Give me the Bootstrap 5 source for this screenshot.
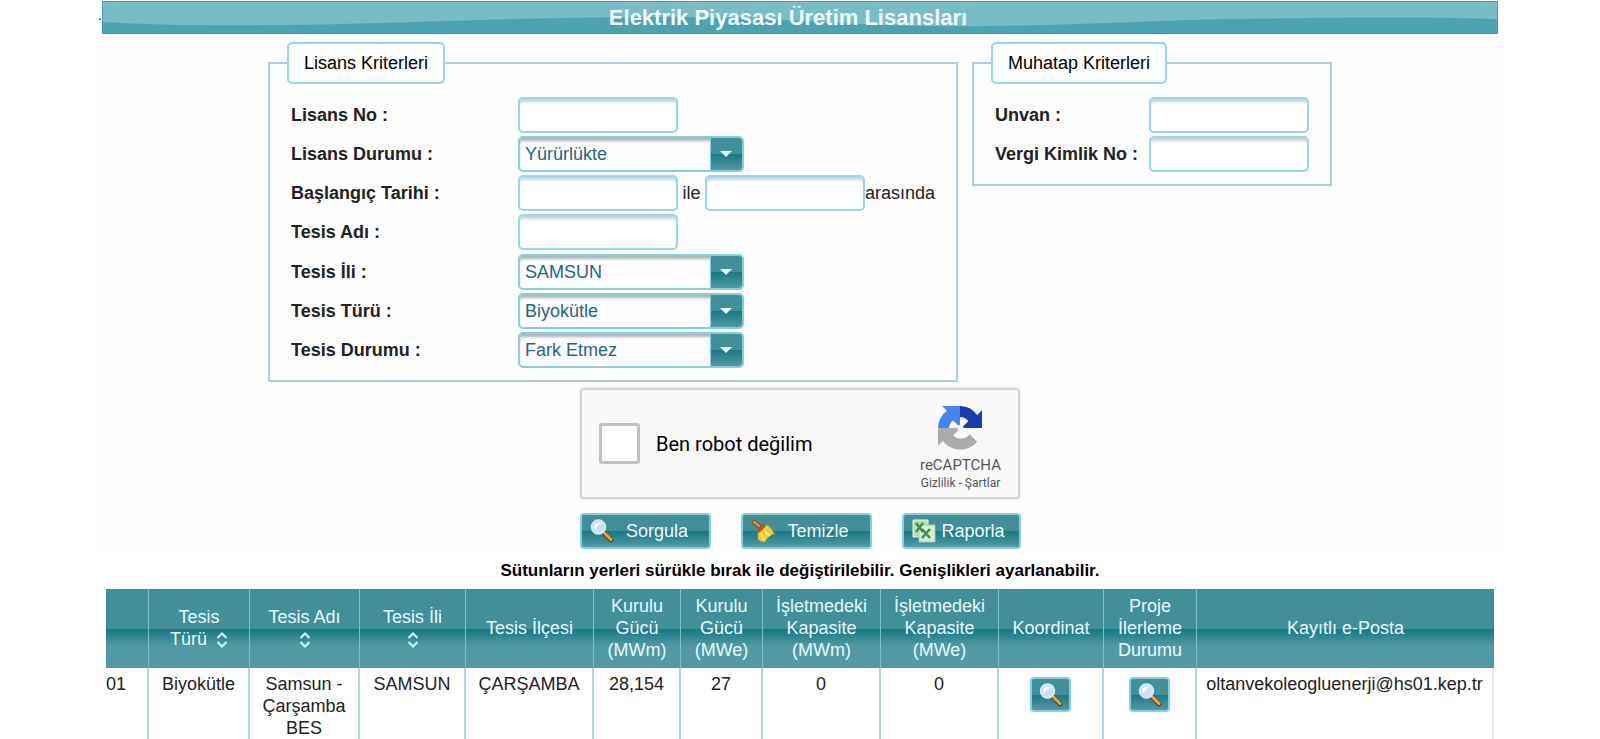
<!DOCTYPE html>
<html lang="tr">
<head>
<meta charset="utf-8">
<meta name="viewport" content="width=device-width, initial-scale=1">
<title>Elektrik Piyasası Üretim Lisansları</title>
<link href="https://cdn.jsdelivr.net/npm/bootstrap@5.3.0/dist/css/bootstrap.min.css" rel="stylesheet">
<style>
:root{--teal:linear-gradient(#418f98 0,#418f98 50%,#167883 50%,#1f7d88 56%,#5299a3 100%)}
body{font-family:"Liberation Sans",Arial,sans-serif;font-size:18px;line-height:22px;color:#222;background:#fff}
.page{max-width:1396px}
.title-bar{height:33px;margin-top:1px;border:1px solid #4a98c2;background:#78bcc6}
.title-bar svg{inset:0}
.title-bar h1{font-size:22px;line-height:31px;color:#eefcff;padding-right:24px}
.lead-dot{left:-5px;top:2px;font-size:14px;color:#000}
.form-area{background:#fdfdfd}
.criteria-row{gap:14px}
.criteria{border:2px solid #b0cfdd;padding:11px 21px 10px}
.criteria legend{float:none;width:auto;margin:0 0 0 -4px;padding:8px 15px;font-size:18px;line-height:22px;color:#000;border:2px solid #98d6e8;border-radius:5px;background:#fdfdfd}
.rows-main{display:grid;grid-template-rows:repeat(7,1fr);min-height:275px}
.rows-side{display:grid;grid-template-rows:repeat(2,1fr);min-height:79px}
.lbl{font-weight:bold}
.lbl-main{width:227px}.lbl-side{width:154px}
.between{width:27px;text-align:center}
.field{width:160px;height:36px;padding:0 6px;border:2px solid #98d6e8;border-radius:5px;background:#fff;box-shadow:inset 0 4px 3px -1px #c6d5dd}
.pick{width:226px;height:36px;border:2px solid #88cddd;border-radius:5px;box-shadow:inset 0 4px 3px -1px #a9b5b9}
.pick select{appearance:none;border:0;background:transparent;color:#1c6786;padding:0 5px;font-size:18px;line-height:22px}
.pick .arrow{width:32px;right:0;top:0;bottom:0;background:var(--teal);border-left:1px solid #88cddd;border-radius:0 3px 3px 0;pointer-events:none}
.captcha{width:440px;height:111px;margin-top:6px;border:2px solid #d6d6d6;border-radius:4px;background:#f9f9f9;padding:0 17px;font-family:Roboto,sans-serif;color:#000;box-shadow:0 0 3px #ddd}
.captcha input{appearance:none;width:41px;height:41px;border:3px solid #c1c1c1;border-radius:3px;background:#fff}
.captcha label{font-size:20px;line-height:24px}
.captcha .logo{padding-top:10px}
.captcha .brand{font-size:15px;line-height:20px;margin-top:5px;color:#555}
.captcha .legal{font-size:12px;line-height:16px;color:#555}
.captcha a{color:inherit;text-decoration:none}
.actions{gap:30px;padding-top:14px}
.act{height:36px;border:2px solid #84d0e0;border-radius:4px;background:var(--teal);color:#f0fcff;font-size:18px;line-height:22px;padding:0 8px}
.act-wide{width:131px}.act-report{width:119px}
.hint{color:#000;font-size:17px;line-height:22px;padding-top:11px;margin-bottom:7px}
.grid-wrap{margin:0 4px}
.licences{table-layout:fixed;border-collapse:separate;border-spacing:0}
.licences thead{background:linear-gradient(#418f98 0,#418f98 50%,#167883 51%,#2b838e 58%,#5299a3 72%,#5299a3 100%)}
.licences th{height:79px;padding:0 4px 2px;font-weight:normal;color:#e6fbff;text-align:center;vertical-align:middle;border-right:1px solid #79bfcc}
.licences td{height:72px;padding:5px 4px 0;text-align:center;vertical-align:top;border-right:2px solid #b4d2e2}
.licences td:first-child{text-align:left;padding-left:0}
.licences th:last-child{border-right:0}
.licences td:last-child{border-right-color:#e2e8ee}
.look{width:41px;height:35px;margin-top:4px;padding:0}
.look svg,.licences th svg{display:inline-block}
.c-no{width:43px}.c-type{width:101px}.c-name{width:110px}.c-city{width:106px}.c-town{width:128px}.c-mwm{width:87px}.c-mwe{width:82px}.c-cap{width:118px}.c-coord{width:105px}.c-proj{width:93px}
</style>
</head>
<body>
<svg class="d-none" aria-hidden="true">
<defs>
<symbol id="lens" viewBox="0 0 24 24"><path d="M14 14 21 21" stroke="#5b4a35" stroke-width="5" stroke-linecap="round"/><path d="M14.500 14 21 20.500" stroke="#e9a73c" stroke-width="3" stroke-linecap="round"/><circle cx="8.500" cy="8" r="7" fill="#c9e0f5" stroke="#dfeaf6" stroke-width="1.500"/><path d="M4 8a5 5 0 0 1 8-3.500C9 5 6 8 5.500 11z" fill="#fff"/></symbol>
<symbol id="updown" viewBox="0 0 12 16"><path d="m1.500 6 4.500-4.500L10.500 6m-9 4 4.500 4.500 4.500-4.500" fill="none" stroke="#c8f1f8" stroke-width="2.200"/></symbol>
</defs>
</svg>
<main class="page mx-auto position-relative">
<header class="title-bar position-relative text-center">
<svg class="position-absolute w-100 h-100" viewBox="0 0 1396 31" preserveAspectRatio="none" aria-hidden="true"><path d="M0 20C60 24 160 24 240 22S440 15 560 15S720 22 820 24S1060 18 1130 17S1300 14 1396 17V31H0Z" fill="#4ba3b2"/></svg>
<h1 class="position-relative fw-bold m-0">Elektrik Piyasası Üretim Lisansları</h1>
<span class="lead-dot position-absolute">.</span>
</header>
<form class="form-area" onsubmit="return false">
<div class="criteria-row d-flex justify-content-center align-items-start pt-2">
<fieldset class="criteria">
<legend>Lisans Kriterleri</legend>
<div class="rows-main">
<div class="d-flex align-items-center"><label class="lbl lbl-main" for="no">Lisans No :</label><input class="field" id="no" type="text"></div>
<div class="d-flex align-items-center"><label class="lbl lbl-main" for="durum">Lisans Durumu :</label><div class="pick position-relative"><select id="durum" class="w-100 h-100"><option>Yürürlükte</option></select><span class="arrow position-absolute d-flex align-items-center justify-content-center"><svg width="12" height="6" viewBox="0 0 12 6"><path d="M0 0h12L6 6z" fill="#e9fbff"/></svg></span></div></div>
<div class="d-flex align-items-center"><label class="lbl lbl-main" for="bas">Başlangıç Tarihi :</label><input class="field" id="bas" type="text"><label class="between" for="son">ile</label><input class="field" id="son" type="text"><span>arasında</span></div>
<div class="d-flex align-items-center"><label class="lbl lbl-main" for="ad">Tesis Adı :</label><input class="field" id="ad" type="text"></div>
<div class="d-flex align-items-center"><label class="lbl lbl-main" for="il">Tesis İli :</label><div class="pick position-relative"><select id="il" class="w-100 h-100"><option>SAMSUN</option></select><span class="arrow position-absolute d-flex align-items-center justify-content-center"><svg width="12" height="6" viewBox="0 0 12 6"><path d="M0 0h12L6 6z" fill="#e9fbff"/></svg></span></div></div>
<div class="d-flex align-items-center"><label class="lbl lbl-main" for="tur">Tesis Türü :</label><div class="pick position-relative"><select id="tur" class="w-100 h-100"><option>Biyokütle</option></select><span class="arrow position-absolute d-flex align-items-center justify-content-center"><svg width="12" height="6" viewBox="0 0 12 6"><path d="M0 0h12L6 6z" fill="#e9fbff"/></svg></span></div></div>
<div class="d-flex align-items-center"><label class="lbl lbl-main" for="tdurum">Tesis Durumu :</label><div class="pick position-relative"><select id="tdurum" class="w-100 h-100"><option>Fark Etmez</option></select><span class="arrow position-absolute d-flex align-items-center justify-content-center"><svg width="12" height="6" viewBox="0 0 12 6"><path d="M0 0h12L6 6z" fill="#e9fbff"/></svg></span></div></div>
</div>
</fieldset>
<fieldset class="criteria">
<legend>Muhatap Kriterleri</legend>
<div class="rows-side">
<div class="d-flex align-items-center"><label class="lbl lbl-side" for="unvan">Unvan :</label><input class="field" id="unvan" type="text"></div>
<div class="d-flex align-items-center"><label class="lbl lbl-side" for="vergi">Vergi Kimlik No :</label><input class="field" id="vergi" type="text"></div>
</div>
</fieldset>
</div>
<div class="captcha d-flex align-items-center mx-auto">
<input type="checkbox" id="robot" class="m-0">
<label for="robot" class="ms-3 me-auto">Ben robot değilim</label>
<div class="logo text-center">
<svg class="d-block mx-auto" width="44" height="44" viewBox="0 0 64 64" aria-hidden="true"><path fill="#1c3aa9" d="M64 32V6l-7 7A32 32 0 0 0 32 0v16c5 0 9 2 12 6l-6 6c-2 2-2 4 0 4z"/><path fill="#4285f4" d="M32 0H6l7 7A32 32 0 0 0 0 32h16c0-4 2-8 6-11l6 6c2 2 4 1 4-1z"/><path fill="#ababab" d="M0 32v26l7-7a32 32 0 0 0 50 1L46 41a16 16 0 0 1-24 2l6-6c2-2 1-5-1-5z"/></svg>
<div class="brand">reCAPTCHA</div>
<div class="legal"><a href="#">Gizlilik</a> - <a href="#">Şartlar</a></div>
</div>
</div>
<div class="actions d-flex justify-content-center">
<button type="button" class="act act-wide d-flex align-items-center"><svg width="24" height="24"><use href="#lens"/></svg><span class="mx-auto">Sorgula</span></button>
<button type="button" class="act act-wide d-flex align-items-center"><svg width="24" height="24" viewBox="0 0 24 24"><path d="M3 3 10 9" stroke="#8d5a2a" stroke-width="5" stroke-linecap="round"/><path d="m3 3 5 4" stroke="#d9a060" stroke-width="2" stroke-linecap="round"/><path d="M7 12 15 6c4 1 6 4 8 9-4 1-6 3-9 8-3 0-6-1-7-3z" fill="#f4cf35" stroke="#c9962a"/><path d="m6 11 6-6 3 2-7 7z" fill="#c9472a"/><path d="m10 15 3 6m1-9 5 5" stroke="#fff29a" stroke-width="1.500"/></svg><span class="mx-auto">Temizle</span></button>
<button type="button" class="act act-report d-flex align-items-center"><svg width="24" height="24" viewBox="0 0 24 24"><path d="M1 1h15v17H1z" fill="#b9dcae" stroke="#e6f4df"/><path d="M7 6h16v17H7z" fill="#d9eed2" stroke="#a5cf9d"/><path d="m4 4 7 9m0-9-7 9m6-3 8 9m0-9-8 9" stroke="#3f8f50" stroke-width="2.500"/></svg><span class="mx-auto">Raporla</span></button>
</div>
</form>
<p class="hint fw-bold text-center">Sütunların yerleri sürükle bırak ile değiştirilebilir. Genişlikleri ayarlanabilir.</p>
<div class="grid-wrap">
<table class="licences w-100">
<colgroup><col class="c-no"><col class="c-type"><col class="c-name"><col class="c-city"><col class="c-town"><col class="c-mwm"><col class="c-mwe"><col class="c-cap"><col class="c-cap"><col class="c-coord"><col class="c-proj"><col></colgroup>
<thead><tr><th></th><th>Tesis<br>Türü <svg width="12" height="16" class="ms-1"><use href="#updown"/></svg></th><th>Tesis Adı<br><svg width="12" height="16"><use href="#updown"/></svg></th><th>Tesis İli<br><svg width="12" height="16"><use href="#updown"/></svg></th><th>Tesis İlçesi</th><th>Kurulu Gücü (MWm)</th><th>Kurulu Gücü (MWe)</th><th>İşletmedeki Kapasite (MWm)</th><th>İşletmedeki Kapasite (MWe)</th><th>Koordinat</th><th>Proje İlerleme Durumu</th><th>Kayıtlı e-Posta</th></tr></thead>
<tbody><tr><td>01</td><td>Biyokütle</td><td>Samsun - Çarşamba BES</td><td>SAMSUN</td><td>ÇARŞAMBA</td><td>28,154</td><td>27</td><td>0</td><td>0</td><td><button type="button" class="act look" aria-label="Koordinat"><svg width="24" height="24"><use href="#lens"/></svg></button></td><td><button type="button" class="act look" aria-label="Proje İlerleme Durumu"><svg width="24" height="24"><use href="#lens"/></svg></button></td><td>oltanvekoleogluenerji@hs01.kep.tr</td></tr></tbody>
</table>
</div>
</main>
<script src="https://cdn.jsdelivr.net/npm/bootstrap@5.3.0/dist/js/bootstrap.bundle.min.js"></script>
</body>
</html>
